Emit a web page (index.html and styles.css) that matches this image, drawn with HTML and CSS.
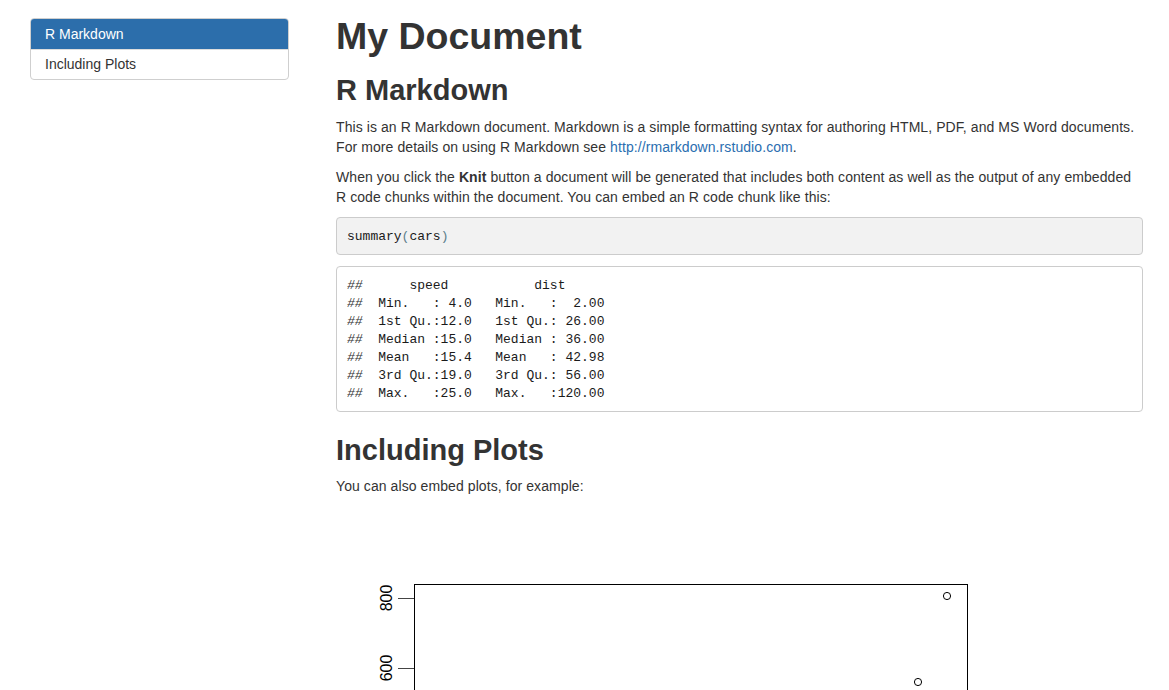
FILE: index.html
```html
<!DOCTYPE html>
<html>
<head>
<meta charset="utf-8">
<title>My Document</title>
<link rel="stylesheet" href="styles.css">
</head>
<body>
<div class="page">
  <nav class="toc">
    <div class="toc-item active">R Markdown</div>
    <div class="toc-item">Including Plots</div>
  </nav>
  <main class="main">
    <h1 class="title">My Document</h1>
    <h2 class="section">R Markdown</h2>
    <p>This is an R Markdown document. Markdown is a simple formatting syntax for authoring HTML, PDF, and MS Word documents. For more details on using R Markdown see <a href="#">http://rmarkdown.rstudio.com</a>.</p>
    <p>When you click the <strong>Knit</strong> button a document will be generated that includes both content as well as the output of any embedded R code chunks within the document. You can embed an R code chunk like this:</p>
    <pre class="code source"><code>summary<span class="paren">(</span>cars<span class="paren">)</span></code></pre>
    <pre class="code output"><code><span class="cm">##</span>      speed           dist       
<span class="cm">##</span>  Min.   : 4.0   Min.   :  2.00  
<span class="cm">##</span>  1st Qu.:12.0   1st Qu.: 26.00  
<span class="cm">##</span>  Median :15.0   Median : 36.00  
<span class="cm">##</span>  Mean   :15.4   Mean   : 42.98  
<span class="cm">##</span>  3rd Qu.:19.0   3rd Qu.: 56.00  
<span class="cm">##</span>  Max.   :25.0   Max.   :120.00  </code></pre>
    <h2 class="section plots">Including Plots</h2>
    <p>You can also embed plots, for example:</p>
    <svg class="plot" width="672" height="200" viewBox="0 0 672 200">
      <rect x="78.5" y="78.5" width="553" height="200" fill="none" stroke="#000" stroke-width="1"/>
      <line x1="62" y1="92.5" x2="78" y2="92.5" stroke="#444" stroke-width="1"/>
      <line x1="62" y1="162.5" x2="78" y2="162.5" stroke="#444" stroke-width="1"/>
      <text x="56" y="92" transform="rotate(-90 56 92)" text-anchor="middle" class="axis">800</text>
      <text x="56" y="162" transform="rotate(-90 56 162)" text-anchor="middle" class="axis">600</text>
      <circle cx="611" cy="90" r="3.6" fill="none" stroke="#000" stroke-width="1"/>
      <circle cx="582" cy="176" r="3.6" fill="none" stroke="#000" stroke-width="1"/>
    </svg>
  </main>
</div>
</body>
</html>
```

FILE: styles.css
```css
html, body {
  margin: 0;
  padding: 0;
  background: #fff;
}

body {
  font-family: "Liberation Sans", Arial, Helvetica, sans-serif;
  font-size: 14px;
  line-height: 20px;
  color: #333;
}

.page {
  display: flex;
  align-items: flex-start;
  gap: 47px;
  padding-left: 30px;
}

.toc {
  flex: 0 0 259px;
  width: 259px;
  margin-top: 18px;
  border: 1px solid #cfcfcf;
  border-radius: 4px;
  overflow: hidden;
  box-sizing: border-box;
}

.toc-item {
  padding: 4px 14px 5px;
  line-height: 20px;
  color: #333;
}

.toc-item + .toc-item {
  border-top: 1px solid #ddd;
}

.toc-item.active {
  background: #2c6eab;
  color: #fff;
  padding-top: 5px;
  padding-bottom: 5px;
}

.main {
  width: 807px;
  flex: 0 0 807px;
}

.title {
  margin: 16px 0 0;
  font-size: 37.5px;
  line-height: 40px;
  font-weight: bold;
  color: #333;
}

.section {
  margin: 18px 0 11px;
  font-size: 29px;
  line-height: 32px;
  font-weight: bold;
  color: #333;
}

.section.plots {
  margin-top: 22px;
  margin-bottom: 10px;
}

p {
  margin: 0 0 10px;
  letter-spacing: 0.08px;
}

a {
  color: #2a6eb0;
  text-decoration: none;
}

.code {
  margin: 0 0 11px;
  padding: 10px 10px 8px;
  border: 1px solid #ccc;
  border-radius: 4px;
  font-family: "Liberation Mono", "Courier New", monospace;
  font-size: 13px;
  line-height: 18px;
  color: #1a1a1a;
  white-space: pre;
}

.code code {
  font-family: inherit;
}

.source {
  background: #f2f2f2;
}

.output {
  background: #fff;
  margin-bottom: 0;
}

.paren {
  color: #5d7f8c;
}

.cm {
  font-style: italic;
  color: #333;
}

.plot {
  display: block;
  margin-top: 0;
}

.axis {
  font-family: "Liberation Sans", Arial, sans-serif;
  font-size: 16px;
  fill: #000;
}
```
